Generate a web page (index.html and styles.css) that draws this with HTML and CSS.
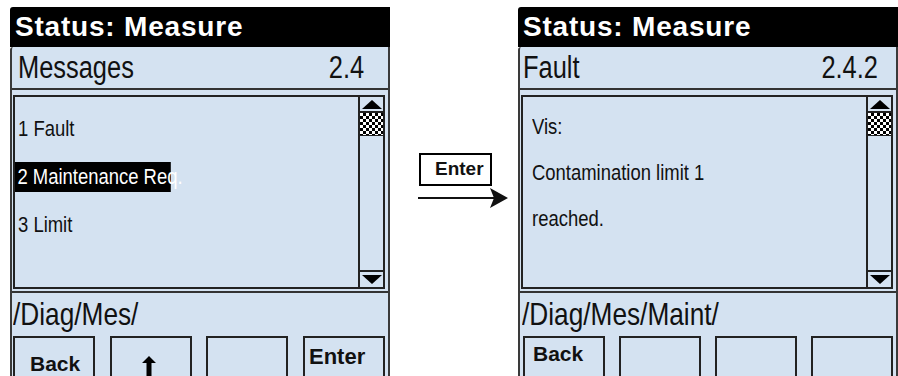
FILE: index.html
```html
<!DOCTYPE html>
<html>
<head>
<meta charset="utf-8">
<title>Status: Measure</title>
<link rel="stylesheet" href="styles.css">
</head>
<body>
<div class="screen">

  <div class="panel">
    <div class="status">Status: Measure</div>
    <div class="pbody">
      <div class="title title-l"><span class="nr">Messages</span><span class="nr nr-end">2.4</span></div>
      <div class="box">
        <div class="list list-l">
          <div class="item"><span class="nr">1 Fault</span></div>
          <div class="item"><span class="nr sel">2 Maintenance Req.</span></div>
          <div class="item"><span class="nr">3 Limit</span></div>
        </div>
        <div class="scroll">
          <div class="sc-up"><i></i></div>
          <div class="sc-thumb"></div>
          <div class="sc-track"></div>
          <div class="sc-down"><i></i></div>
        </div>
      </div>
      <div class="path path-l"><span class="nr">/Diag/Mes/</span></div>
      <div class="keys keys-l">
        <div class="key k-back-l">Back</div>
        <div class="key k-up">
          <svg width="14" height="20" viewBox="0 0 14 20"><path d="M7 0 L14 7 L9.5 7 L9.5 20 L4.5 20 L4.5 7 L0 7 Z" fill="#000"/></svg>
        </div>
        <div class="key"></div>
        <div class="key k-enter">Enter</div>
      </div>
    </div>
  </div>

  <div class="middle">
    <div class="enter-box">Enter</div>
    <svg class="arrow" width="92" height="24" viewBox="0 0 92 24">
      <line x1="0" y1="12" x2="76" y2="12" stroke="#111" stroke-width="2"/>
      <path d="M72 2 L90 12 L72 22 L76 12 Z" fill="#111"/>
    </svg>
  </div>

  <div class="panel">
    <div class="status">Status: Measure</div>
    <div class="pbody">
      <div class="title title-r"><span class="nr">Fault</span><span class="nr nr-end">2.4.2</span></div>
      <div class="box">
        <div class="list list-r">
          <div class="item"><span class="nr">Vis:</span></div>
          <div class="item"><span class="nr">Contamination limit 1</span></div>
          <div class="item"><span class="nr">reached.</span></div>
        </div>
        <div class="scroll">
          <div class="sc-up"><i></i></div>
          <div class="sc-thumb"></div>
          <div class="sc-track"></div>
          <div class="sc-down"><i></i></div>
        </div>
      </div>
      <div class="path path-r"><span class="nr">/Diag/Mes/Maint/</span></div>
      <div class="keys keys-r">
        <div class="key k-back-r">Back</div>
        <div class="key"></div>
        <div class="key"></div>
        <div class="key"></div>
      </div>
    </div>
  </div>

</div>
</body>
</html>
```
FILE: styles.css
```css
html, body { margin:0; padding:0; background:#fff; }
body { width:898px; height:376px; overflow:hidden; font-family:"Liberation Sans", Arial, sans-serif; color:#111; }
.screen { display:flex; padding-top:7px; padding-left:10px; }

/* narrow face: Arial squeezed like Arial Narrow */
.nr { display:inline-block; white-space:nowrap; transform:scaleX(0.82); transform-origin:0 50%; }
.nr-end { transform-origin:100% 50%; }

.panel { width:380px; display:flex; flex-direction:column; height:380px; }
.status { height:40px; background:#000; color:#fff; font-weight:bold; font-size:28px; line-height:40px; padding-left:5px; letter-spacing:0.8px; border-radius:3px 0 0 0; }
.pbody { flex:1; background:#d4e2f1; border-left:2px solid #3a3a3a; border-right:2px solid #3a3a3a; border-radius:3px 0 0 4px; }

.title { height:41px; border-bottom:2px solid #333; display:flex; justify-content:space-between; align-items:center; font-size:31px; }
.title-l { padding:0 24px 0 6px; }
.title-r { padding:0 18px 0 3px; }

.box { height:190px; margin:5px 3px 0 1px; border:2px solid #222; display:flex; }
.list { flex:1; font-size:22.5px; line-height:48px; }
.list-l { padding-top:8px; }
.list-r { padding:7px 0 0 9px; line-height:46px; }
.list-l .item { padding-left:3px; }
.sel { color:#fff; line-height:30px; padding-left:3px; margin-left:-3px; background:linear-gradient(#000, #000) no-repeat 0 0 / 190px 100%; }

.scroll { width:23px; border-left:2px solid #222; display:flex; flex-direction:column; }
.sc-up { height:14px; border-bottom:2px solid #222; display:flex; justify-content:center; align-items:flex-end; }
.sc-up i { border-left:10px solid transparent; border-right:10px solid transparent; border-bottom:9px solid #000; margin-bottom:2px; }
.sc-thumb { height:22px; background:repeating-conic-gradient(#000 0 25%, #fff 0 50%) 0 0 / 6px 6px; border-bottom:1px solid #222; }
.sc-track { flex:1; }
.sc-down { height:15px; border-top:2px solid #222; display:flex; justify-content:center; align-items:flex-start; }
.sc-down i { border-left:10px solid transparent; border-right:10px solid transparent; border-top:9px solid #000; margin-top:3px; }

.path { height:43px; margin-top:2px; border-top:2px solid #333; font-size:32px; line-height:43px; }
.path-l { padding-left:1px; }
.path-r { padding-left:2px; }

.keys { display:flex; justify-content:space-between; height:45px; }
.keys-l { margin:0 3px 0 1px; }
.keys-r { margin:0 3px 0 3px; }
.key { width:78px; height:45px; border:2px solid #222; font-weight:bold; font-size:21px; line-height:21px; }
.k-back-l { height:30px; padding-top:15px; text-indent:15px; }
.k-enter { height:37px; padding-top:8px; text-indent:4px; font-size:22px; }
.k-back-r { height:40px; padding-top:5px; text-indent:8px; }
.k-up { display:flex; justify-content:center; align-items:flex-start; }
.k-up svg { margin:18px 0 0 -3px; }

.middle { width:128px; display:flex; flex-direction:column; }
.enter-box { width:69px; height:29px; margin:146px 0 0 29px; border:2px solid #000; font-weight:bold; font-size:19px; line-height:27px; text-indent:14px; }
.arrow { margin:0 0 0 28px; }
```
